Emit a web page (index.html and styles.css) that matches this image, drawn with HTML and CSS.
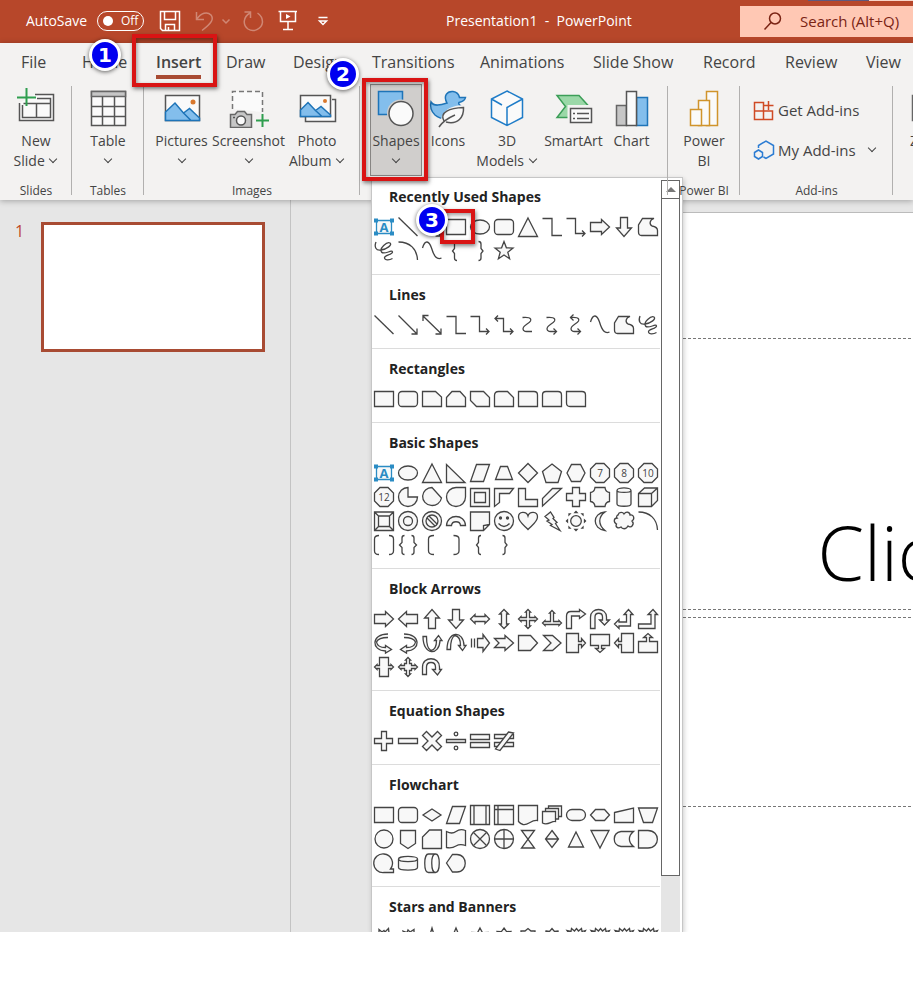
FILE: index.html
```html
<!DOCTYPE html>
<html lang="en">
<head>
<meta charset="utf-8">
<meta name="viewport" content="width=device-width, initial-scale=1">
<title>Presentation1 - PowerPoint</title>
<link rel="stylesheet" href="styles.css">
</head>
<body>
<div class="app">
  <header class="titlebar">
    <div class="quick">
      <span class="autosave" id="autosave">AutoSave</span>
      <button class="toggle" role="switch" aria-checked="false" aria-labelledby="autosave"><span class="knob"></span>Off</button>
      <button class="qbtn save" aria-label="Save"><svg width="22" height="22" viewBox="0 0 22 22"><path d="M1.500 1.500H20.500V20.500H3.500L1.500 18.500ZM5.500 1.500V9.500H16.500V1.500M6.500 20.500V14.500H15.500V20.500M9.500 17V20"/></svg></button>
      <button class="qbtn dim undo" aria-label="Undo"><svg width="22" height="22" viewBox="0 0 22 22"><path d="M3.500 2V9.500H11M3.500 9.500C8 3 14 1 18 5C21 9 19 13 9 20.500"/></svg></button>
      <button class="qbtn dim more" aria-label="Undo history"><svg width="10" height="22" viewBox="0 0 10 22"><path d="M1.500 9.500L5 13 8.500 9.500"/></svg></button>
      <button class="qbtn dim redo" aria-label="Repeat"><svg width="22" height="22" viewBox="0 0 22 22"><path d="M2.500 2H8.500V8M8 3C1 7 .500 15 6 19C12 23 20 18.500 20.500 12C20.500 8 18.500 5 15.500 3"/></svg></button>
      <button class="qbtn show" aria-label="Start From Beginning"><svg width="22" height="22" viewBox="0 0 22 22"><path d="M1.500 1.500H20M3.500 1.500V11.500H18.500V1.500M11 11.500V19M6 19.500H16"/><path class="solid" d="M9 4L13.500 6.500 9 9Z"/></svg></button>
      <button class="qbtn custom" aria-label="Customize Quick Access Toolbar"><svg width="12" height="22" viewBox="0 0 12 22"><path d="M1.500 7.500H10.500M2.500 11L6 14.500 9.500 11Z"/></svg></button>
    </div>
    <div class="doc-title">Presentation1&nbsp; -&nbsp; PowerPoint</div>
    <div class="strip"></div>
    <label class="search"><svg width="20" height="20" viewBox="0 0 20 20"><circle cx="12" cy="7.500" r="5.500"/><path d="M8 11.500L1.500 18.500"/></svg><input type="text" aria-label="Search" placeholder="Search (Alt+Q)"></label>
  </header>

  <div class="ribbon">
    <nav class="tabs">
      <a href="#">File</a>
      <a href="#">Home<span class="badge badge-one">1</span></a>
      <a href="#" class="active">Insert<span class="mark mark-tab"></span></a>
      <a href="#">Draw</a>
      <a href="#">Design<span class="badge badge-two">2</span></a>
      <a href="#">Transitions</a>
      <a href="#">Animations</a>
      <a href="#">Slide Show</a>
      <a href="#">Record</a>
      <a href="#">Review</a>
      <a href="#">View</a>
    </nav>

    <div class="groups">
      <section class="group slides">
        <div class="tools">
          <button class="tool"><svg class="icon" viewBox="0 0 40 40"><path class="paper" d="M19 6.500H37.500V32.500H3.500V15"/><path class="line" d="M21 10.500H34.500V29.500H6.500V17M7.500 15.500H34.500M20.500 15.500V29.500"/><path class="green" d="M10.500 0V18M1 9.500H20"/></svg><span>New<br>Slide <i class="chev"></i></span></button>
        </div>
        <h2>Slides</h2>
      </section>
      <section class="group tables">
        <div class="tools">
          <button class="tool"><svg class="icon" viewBox="0 0 40 40"><path class="paper" d="M3.500 3.500H37.500V37.500H3.500Z"/><path class="gray" d="M3.500 3.500H37.500V8.500H3.500Z"/><path class="line" d="M3.500 18.500H37.500M3.500 28.500H37.500M14.500 8.500V37.500M26.500 8.500V37.500"/></svg><span>Table<br><i class="chev"></i></span></button>
        </div>
        <h2>Tables</h2>
      </section>
      <section class="group images">
        <div class="tools">
          <button class="tool"><svg class="icon" viewBox="0 0 40 40"><path class="paper" d="M3.500 7.500H37.500V32.500H3.500Z"/><path class="blue" d="M3.500 24L13 15 21.500 25 27.500 20.500 37.500 30V32.500H3.500ZM21.500 25L29 32.500"/><circle class="sun" cx="31" cy="14" r="2.500"/></svg><span>Pictures<br><i class="chev"></i></span></button>
          <button class="tool"><svg class="icon" viewBox="0 0 40 40"><path class="dash" d="M3.500 21V3.500H33.500V24"/><path class="gray" d="M1.500 26.500H6L8.500 23.500H15.500L18 26.500H22.500V39.500H1.500Z"/><circle class="paper" cx="12" cy="32.500" r="4.500"/><path class="line" d="M4 29.500H6"/><path class="green" d="M33.500 26V39M27 32.500H40"/></svg><span>Screenshot<br><i class="chev"></i></span></button>
          <button class="tool"><svg class="icon" viewBox="0 0 40 40"><path class="paper" d="M35 11.500H38.500V33.500H8.500V29"/><path class="paper" d="M3.500 7.500H33.500V28.500H3.500Z"/><path class="blue" d="M3.500 22L11 14.500 18.500 22.500 24 18.500 33.500 27V28.500H3.500ZM18.500 22.500L25 28.500"/><circle class="sun" cx="28" cy="13" r="2"/></svg><span>Photo<br>Album <i class="chev"></i></span></button>
        </div>
        <h2>Images</h2>
      </section>
      <section class="group illustrations">
        <div class="tools">
          <div class="dropdown">
            <button class="tool pressed" aria-expanded="true"><svg class="icon" viewBox="0 0 40 40"><path class="blue" d="M2.500 3.500H26.500V26.500H2.500Z"/><circle class="halo" cx="25" cy="25.500" r="14"/><circle class="paper" cx="25" cy="25.500" r="12"/></svg><span>Shapes<br><i class="chev"></i></span></button>
            <span class="mark mark-shapes"></span>
            <div class="menu">
              <div class="lists">
                <section><h3>Recently Used Shapes</h3><div class="gallery" data-set="recent"></div><span class="mark mark-rect"></span><span class="badge badge-three">3</span></section>
                <section><h3>Lines</h3><div class="gallery" data-set="lines"></div></section>
                <section><h3>Rectangles</h3><div class="gallery" data-set="rectangles"></div></section>
                <section><h3>Basic Shapes</h3><div class="gallery" data-set="basic"></div></section>
                <section><h3>Block Arrows</h3><div class="gallery" data-set="arrows"></div></section>
                <section><h3>Equation Shapes</h3><div class="gallery" data-set="equation"></div></section>
                <section><h3>Flowchart</h3><div class="gallery" data-set="flowchart"></div></section>
                <section><h3>Stars and Banners</h3><div class="gallery" data-set="stars"></div></section>
              </div>
              <div class="scrollbar"><button class="up" aria-label="Scroll up"></button><div class="thumb"></div></div>
            </div>
          </div>
          <button class="tool"><svg class="icon" viewBox="0 0 40 40"><path class="blue" d="M3 14C6 19 13 17 19 15C15 8 19 3 25 3.500C29 4 31 7 31.500 9.500H37.500C37 13 33 14 31 14.500C29 17 35 17 34 22C30 32 14 33 7 27C3 23 2 18 3 14Z"/><path class="halo" d="M12 40C12 22 22 17 39 17C40 32 30 38 16 37Z"/><path class="paper" d="M16 33C11 24 22 20 35.500 19.500C36 29 30 37 18 34"/><path class="line" d="M11 39C15 33 20 30 27 27"/></svg><span>Icons</span></button>
          <button class="tool"><svg class="icon" viewBox="0 0 40 40"><path class="cube" d="M20 3L35.500 11V29.500L20 37.500 4.500 29.500V11ZM4.500 11L15 17M20 37.500V19.500L35.500 11"/></svg><span>3D<br>Models <i class="chev"></i></span></button>
          <button class="tool"><svg class="icon" viewBox="0 0 40 40"><path class="mint" d="M3 7.500H25L35 18.500 25 29.500H3L11.500 18.500Z"/><path class="halo" d="M13.500 17H40V37H13.500Z"/><path class="paper" d="M16.500 20.500H37.500V34.500H16.500Z"/><path class="line" d="M19 25.500H21M23 25.500H35M19 30.500H21M23 30.500H35"/></svg><span>SmartArt</span></button>
          <button class="tool"><svg class="icon" viewBox="0 0 40 40"><path class="gray" d="M4.500 17.500H14.500V37.500H4.500Z"/><path class="blue" d="M24.500 9.500H35.500V37.500H24.500Z"/><path class="paper" d="M14.500 3.500H24.500V37.500H14.500Z"/></svg><span>Chart</span></button>
        </div>
      </section>
      <section class="group power">
        <div class="tools">
          <button class="tool"><svg class="icon" viewBox="0 0 40 40"><path class="gold" d="M22.500 3.500H33.500V37.500H22.500Z"/><path class="gold" d="M14.500 12.500H25.500V37.500H14.500Z"/><path class="gold" d="M6.500 21.500H17.500V37.500H6.500Z"/></svg><span>Power<br>BI</span></button>
        </div>
        <h2>Power BI</h2>
      </section>
      <section class="group addins">
        <div class="tools rows">
          <button class="row"><svg width="22" height="22" viewBox="0 0 22 22"><path class="orange" d="M1.500 3.500H10.500V20.500H1.500ZM1.500 12H19.500V20.500H1.500M15.500 2V11M11 6.500H20.500"/></svg>Get Add-ins</button>
          <button class="row"><svg width="22" height="22" viewBox="0 0 22 22"><path class="hex" d="M5.500 9V6.500L13 2 20.500 6.500V15L13 19.500 10.500 18M1.500 13.500L5.500 11 9.500 13.500V17.500L5.500 20 1.500 17.500Z"/></svg>My Add-ins <i class="chev"></i></button>
        </div>
        <h2>Add-ins</h2>
      </section>
      <section class="group links">
        <div class="tools">
          <button class="tool"><svg class="icon" viewBox="0 0 40 40"><path class="gray" d="M3.500 7.500H37.500V32.500H3.500Z"/></svg><span>Zoom</span></button>
        </div>
      </section>
    </div>
  </div>

  <main class="workspace">
    <aside class="thumbs"><span>1</span><div class="thumbnail"></div></aside>
    <div class="stage">
      <div class="slide">
        <div class="holder title-holder"><h1>Click to add title</h1></div>
        <div class="holder subtitle-holder"></div>
      </div>
    </div>
  </main>
</div>
<script src="shapes.js"></script>
</body>
</html>
```

FILE: styles.css
```css
* { box-sizing: border-box; }
body { margin: 0; background: #fff; color: #444; font: 14px/20px "Open Sans", "Noto Sans", sans-serif; }
button { margin: 0; padding: 0; border: 0; background: none; color: inherit; font: inherit; }
h1, h2, h3 { margin: 0; font-weight: 400; }
svg { display: block; flex: none; fill: none; }
.app { display: flex; flex-direction: column; height: calc(100vh - 68px); overflow: hidden; background: #e6e6e6; }

/* Title bar */
.titlebar { position: relative; display: flex; flex: none; align-items: center; height: 43px; padding-bottom: 1px; background: #b7472a; color: #fff; }
.quick { display: flex; flex: none; align-items: center; width: 446px; padding-left: 26px; }
.autosave { width: 71px; }
.toggle { display: flex; align-items: center; gap: 8px; width: 47px; height: 20px; padding-left: 5px; border: 1px solid #fff; border-radius: 10px; font-size: 12px; }
.knob { width: 10px; height: 10px; border-radius: 50%; background: #fff; }
.qbtn svg { stroke: #fff; stroke-width: 1.5; }
.qbtn .solid { fill: #fff; stroke: none; }
.dim { opacity: .35; }
.save { margin-left: 15px; }
.undo { margin-left: 12px; }
.more { margin-left: 6px; }
.redo { margin-left: 11px; }
.show { margin-left: 13px; }
.custom { margin-left: 18px; }
.doc-title { flex: 1; white-space: nowrap; }
.strip { position: absolute; top: 0; right: 0; width: 105px; height: 1px; background: linear-gradient(90deg, #5f587c 61px, #f8d5c8 61px); }
.search { display: flex; flex: none; align-items: center; width: 173px; height: 31px; padding-left: 23px; background: #ffc8b4; }
.search svg { stroke: #7a2414; stroke-width: 1.5; }
.search input { width: 100px; flex: 1; margin-left: 17px; padding: 0; border: 0; background: none; color: #7a2414; font: inherit; font-size: 15px; }
.search input::placeholder { color: #7a2414; opacity: 1; }

/* Ribbon */
.ribbon { position: relative; z-index: 2; flex: none; background: #f3f2f1; box-shadow: 0 1px 6px rgba(0, 0, 0, .3); }
.tabs { display: grid; grid-template-columns: 61px 74px 70px 67px 79px 108px 113px 110px 82px 81px 1fr; height: 41px; padding: 6px 0 0 21px; font-size: 16px; line-height: 26px; }
.tabs a { position: relative; justify-self: start; height: 30px; color: #444; text-decoration: none; white-space: nowrap; }
.tabs .active { border-bottom: 4px solid #a84b33; font-weight: 600; }
.groups { display: flex; height: 116px; }
.group { position: relative; display: flex; flex: none; flex-direction: column; }
.group::after { content: ""; position: absolute; top: 2px; right: 0; bottom: 5px; width: 1px; background: #b1b0af; }
.group h2 { font-size: 12px; line-height: 18px; text-align: center; }
.tools { display: grid; flex: none; grid-template-columns: 1fr; height: 98px; }
.slides, .tables { width: 72px; }
.images { width: 216px; }
.images .tools { grid-template-columns: 67px 67px 70px; padding-left: 4px; }
.illustrations { width: 308px; }
.illustrations .tools { grid-template-columns: 52px 52px 66px 67px 49px; padding-left: 10px; }
.power { width: 72px; }
.addins { width: 153px; }
.links { width: 72px; margin-right: -52px; }
.links::after { content: none; }
.tool { display: flex; flex-direction: column; align-items: center; gap: 3px; width: 100%; padding-top: 4px; white-space: nowrap; }
.tool > span { display: block; }
.icon { width: 40px; height: 40px; stroke-width: 1.5; }
.chev { display: inline-block; width: 6px; height: 6px; margin: 0 2px 4px; border: solid #444; border-width: 0 1px 1px 0; transform: rotate(45deg); }
.pressed { height: 92px; border: 1px solid #8a8886; background: #d0cecc; padding-top: 3px; }
.paper { fill: #fafafa; stroke: #555; }
.line { stroke: #555; }
.gray { fill: #c6c6c6; stroke: #666; }
.green { stroke: #2f9e4f; stroke-width: 2; }
.blue { fill: #83beec; stroke: #1e74b8; }
.sun { fill: #d9782d; }
.dash { fill: #fafafa; stroke: #777; stroke-dasharray: 5 3; }
.halo { fill: #f3f2f1; }
.pressed .halo { fill: #d0cecc; }
.cube { fill: #fafafa; stroke: #1e7cc8; }
.mint { fill: #9bd8a8; stroke: #3c9e58; }
.gold { fill: #fafafa; stroke: #d0942c; }
.orange { stroke: #cf4a24; stroke-width: 1.5; }
.hex { stroke: #2b7cd3; stroke-width: 1.5; }
.rows { display: flex; flex-direction: column; padding: 15px 0 0 13px; gap: 18px; }
.row { display: flex; align-items: center; gap: 3px; height: 22px; font-size: 15px; white-space: nowrap; }
.row .chev { margin-left: 10px; }

/* Shapes menu */
.dropdown { position: relative; }
.menu { position: absolute; top: 93px; left: 1px; display: flex; width: 312px; height: calc(100vh - 245px); border: 1px solid #c6c6c6; border-bottom: 0; background: #fff; box-shadow: 1px 2px 5px rgba(0, 0, 0, .2); overflow: hidden; }
.lists { width: 288px; }
.lists section { position: relative; padding-bottom: 11px; }
.lists section + section { border-top: 1px solid #dcdcdc; }
.lists h3 { height: 38px; padding-left: 17px; color: #222; font-size: 14px; font-weight: 700; line-height: 40px; }
.lists section:first-child h3 { height: 37px; line-height: 37px; }
.gallery { display: grid; grid-template-columns: repeat(12, 24px); grid-auto-rows: 24px; }
.shape svg { width: 24px; height: 24px; fill: #f8f8f8; stroke: #444; stroke-width: 1.3; }
.shape .open { fill: none; }
.shape .ink { fill: #444; }
.shape text { fill: #444; stroke: none; font: 10px "Open Sans", sans-serif; text-anchor: middle; }
.shape .tb { stroke: #2b8cc4; }
.shape .tb-dot { fill: #2b8cc4; stroke: none; }
.shape .tb-a { fill: #2b8cc4; font-size: 13px; font-weight: 700; }
.scrollbar { display: flex; flex-direction: column; width: 19px; margin: 2px 0 0 1px; background: #e5e5e5; }
.up { display: grid; place-items: center; flex: none; height: 19px; border: 1px solid #666; background: #fff; }
.up::before { content: ""; border: solid transparent; border-width: 0 5px 5px; border-bottom-color: #777; }
.thumb { height: 90%; flex: none; border: 1px solid #666; border-top: 0; background: #fff; }

/* Step marks */
.mark { position: absolute; z-index: 3; border: 4px solid #d91414; box-shadow: 1px 2px 4px rgba(0, 0, 0, .5), inset 1px 2px 4px rgba(0, 0, 0, .4); pointer-events: none; }
.mark-tab { top: -15px; left: -24px; width: 85px; height: 53px; }
.mark-shapes { top: -6px; left: -8px; width: 66px; height: 103px; }
.mark-rect { top: 31px; left: 68px; width: 35px; height: 35px; }
.badge { position: absolute; z-index: 4; width: 32px; height: 32px; border: 3px solid #fff; border-radius: 50%; background: #0000f0; box-shadow: 0 1px 4px rgba(0, 0, 0, .6); color: #fff; font: bold 20px/26px "DejaVu Sans", sans-serif; text-align: center; }
.badge-one { top: -10px; left: 7px; }
.badge-two { top: 9px; left: 34px; }
.badge-three { top: 26px; left: 44px; }

/* Workspace */
.workspace { display: flex; flex: 1; min-height: 0; }
.thumbs { display: flex; flex: none; gap: 17px; width: 291px; padding: 21px 0 0 15px; border-right: 1px solid #c3c3c3; color: #c0492c; font-size: 16px; }
.thumbnail { width: 224px; height: 130px; margin-top: 1px; border: 3px solid #a84b33; background: #fff; }
.stage { flex: 1; min-width: 0; padding: 12px 0 0 100px; overflow: hidden; }
.slide { width: 1386px; height: 100%; padding: 125px 156px 0; border: solid #bbb; border-width: 1px 0 0 1px; background: #fff; }
.holder { border: 1px dashed #777; }
.title-holder { display: flex; align-items: end; justify-content: center; height: 272px; padding-bottom: 12px; }
.title-holder h1 { color: #000; font: 300 75px/90px "Open Sans", "Noto Sans", sans-serif; white-space: nowrap; }
.subtitle-holder { height: 190px; margin-top: 7px; }
```

FILE: shapes.js
```js
const C = (r, x = 12, y = 12, cls = "") => `<circle class="${cls}" cx="${x}" cy="${y}" r="${r}"/>`;
const P = (d, cls = "") => `<path class="${cls}" d="${d}"/>`;
const label = (n) => P("M8 2.500H16L21.500 8V16L16 21.500H8L2.500 16V8Z") + `<text x="12" y="16">${n}</text>`;

// Regular star or burst with n tips
const star = (n, outer, inner) => {
  const pts = [];
  for (let i = 0; i < n * 2; i++) {
    const r = i % 2 ? inner : outer;
    const a = (Math.PI * i) / n - Math.PI / 2;
    pts.push(`${(12 + r * Math.cos(a)).toFixed(1)} ${(12 + r * Math.sin(a)).toFixed(1)}`);
  }
  return P(`M${pts.join("L")}Z`);
};

const textBox = P("M4.500 5.500H19.500V18.500H4.500Z", "tb") +
  P("M2 3.500h4v4h-4ZM18 3.500h4v4h-4ZM2 16.500h4v4h-4ZM18 16.500h4v4h-4Z", "tb-dot") +
  '<text class="tb-a" x="12" y="17">A</text>';
const line = P("M2.500 2.500L21.500 21", "open");
const lineArrow = P("M2.500 2.500L20.500 20.500M21 15.500V21H15.500", "open");
const elbow = P("M2.500 3.500H12V20.500H22", "open");
const elbowArrow = P("M2.500 3.500H11.500V18.500H21M18 15.500L21 18.500 18 21.500", "open");
const freeform = P("M6.500 3.500H18C13.500 5 13 9 16 11C19 11.500 21.500 12 21.500 15.500V20.500H5.500Q2.500 20.500 2.500 17V10Z");
const scribble = P("M4 3C2 8 4 12 9 11C15 10 20.500 6 18 4C15 2.500 7 9 9.500 13C12 16.500 20 10 20.500 13C20.500 16 12 16 12.500 19C13 22 18 21 20.500 19.500", "open");
const arc = P("M2.500 3C14 3 21 10 21.500 21", "open");
const curve = P("M2.500 9C5 .500 9 1.500 11.500 9C14 17.500 17 21 21.500 19", "open");
const braceL = P("M13 2.500Q10.500 2.500 10.500 5V9.500L8.500 12 10.500 14.500V19Q10.500 21.500 13 21.500", "open");
const braceR = P("M10.500 2.500Q13 2.500 13 5V9.500L15 12 13 14.500V19Q13 21.500 10.500 21.500", "open");
const rect = P("M2.500 4.500H21.500V19.500H2.500Z");
const round = '<rect x="2.500" y="4.500" width="19" height="15" rx="3.500"/>';
const ellipse = '<ellipse cx="12" cy="12" rx="9.500" ry="7"/>';
const triangle = P("M12 3L21.500 21.500H2.500Z");
const right = P("M2.500 7.500H13.500V4.500L21.500 12 13.500 19.500V16.500H2.500Z");
const down = P("M8.500 2.500H15.500V13H19.500L12 21.500 4.500 13H8.500Z");
const parallelogram = P("M8.500 3.500H21.500L15.500 20.500H2.500Z");
const curved = P("M6.500 4.500C11 4 16 4.500 14.500 8C13 11 7 12 7 16C7 19 11 18.500 16 18.500", "open");
const burst = P("M2.500 9.500L5 8.500 3 5.500 7 6.500 7.500 3.500 10.500 6 12.500 3.500 14.500 6 17.500 3.500 18 6.500 21.500 5.500 19.500 9 21.500 12 19.500 15 21.500 18.500 18 18 17 21 12 19 7 21 6 18 2.500 18.500 4.500 15Z");

const sets = {
  recent: [
    ["Text Box", textBox], ["Line", line], ["Line Arrow", lineArrow], ["Rectangle", rect], ["Oval", ellipse],
    ["Rounded Rectangle", round], ["Isosceles Triangle", triangle], ["Elbow Connector", elbow],
    ["Elbow Arrow Connector", elbowArrow], ["Right Arrow", right], ["Down Arrow", down], ["Freeform", freeform],
    ["Scribble", scribble], ["Arc", arc], ["Curve", curve], ["Left Brace", braceL], ["Right Brace", braceR],
    ["Star: 5 Points", star(5, 9.5, 4)]
  ],
  lines: [
    ["Line", line], ["Line Arrow", lineArrow], ["Double Arrow", P("M3 3L21 20.500M21 15.500V21H15.500M3 8V2.500H8.500", "open")],
    ["Elbow Connector", elbow], ["Elbow Arrow", elbowArrow],
    ["Elbow Double Arrow", P("M3 5.500H11.500V18.500H21M18 15.500L21 18.500 18 21.500M6 2.500L3 5.500 6 8.500", "open")],
    ["Curved Connector", curved], ["Curved Arrow", curved + P("M13.500 15.500L16.500 18.500 13.500 21.500", "open")],
    ["Curved Double Arrow", curved + P("M13.500 15.500L16.500 18.500 13.500 21.500M9.500 1.500L6.500 4.500 9.500 7.500", "open")],
    ["Curve", curve], ["Freeform", freeform], ["Scribble", scribble]
  ],
  rectangles: [
    ["Rectangle", rect], ["Rounded", round], ["Snip Single", P("M2.500 4.500H15.500L21.500 10V19.500H2.500Z")],
    ["Snip Same Side", P("M2.500 10.500L8 4.500H16L21.500 10.500V19.500H2.500Z")],
    ["Snip Diagonal", P("M2.500 4.500H15.500L21.500 10.500V19.500H8.500L2.500 13.500Z")],
    ["Snip and Round", P("M6.500 4.500H15.500L21.500 10.500V19.500H2.500V8.500Q2.500 4.500 6.500 4.500Z")],
    ["Round Single", P("M2.500 4.500H18Q21.500 4.500 21.500 8V19.500H2.500Z")],
    ["Round Same Side", P("M6 4.500H18Q21.500 4.500 21.500 8V19.500H2.500V8Q2.500 4.500 6 4.500Z")],
    ["Round Diagonal", P("M2.500 4.500H18Q21.500 4.500 21.500 8V19.500H6Q2.500 19.500 2.500 16Z")]
  ],
  basic: [
    ["Text Box", textBox], ["Oval", ellipse], ["Triangle", triangle], ["Right Triangle", P("M2.500 3.500V21.500H21Z")],
    ["Parallelogram", parallelogram], ["Trapezoid", P("M8.500 5.500H15.500L20.500 18.500H3.500Z")],
    ["Diamond", P("M12 2.500L21.500 12 12 21.500 2.500 12Z")], ["Pentagon", P("M12 3L21.500 10.500 18 21.500H6L2.500 10.500Z")],
    ["Hexagon", P("M7.500 3.500H16.500L21 12 16.500 20.500H7.500L3 12Z")], ["Heptagon", label(7)], ["Octagon", label(8)], ["Decagon", label(10)],
    ["Dodecagon", label(12)], ["Pie", P("M12 2.500V12H21.500A9.500 9.500 0 1 1 12 2.500Z")],
    ["Chord", P("M12 2.500L21.500 13A9.500 9 0 1 1 12 2.500Z")], ["Teardrop", P("M12 2.500H21.500V12A9.500 9.500 0 1 1 12 2.500Z")],
    ["Frame", P("M2.500 3.500H21.500V21.500H2.500ZM6.500 7.500H17.500V17.500H6.500Z")],
    ["Half Frame", P("M2.500 3.500H21.500L17.500 8.500H7.500V17.500L2.500 21.500Z")], ["L-Shape", P("M2.500 3.500H9.500V14.500H21.500V21.500H2.500Z")],
    ["Diagonal Stripe", P("M12.500 3.500H21.500L2.500 21V13.500Z")], ["Cross", P("M8.500 2.500H15.500V8.500H21.500V15.500H15.500V21.500H8.500V15.500H2.500V8.500H8.500Z")],
    ["Plaque", P("M7 2.500H17Q17.500 7 21.500 7.500V16.500Q17.500 17 17 21.500H7Q6.500 17 2.500 16.500V7.500Q6.500 7 7 2.500Z")],
    ["Cylinder", P("M5 5.500V19C5 22 19 22 19 19V5.500C19 2 5 2 5 5.500C5 8 19 8 19 5.500")],
    ["Cube", P("M2.500 8.500L8.500 3H21.500V15.500L15.500 21.500H2.500ZM2.500 8.500H15.500V21.500M15.500 8.500L21.500 3")],
    ["Bevel", P("M2.500 3H21.500V21.500H2.500ZM6.500 7H17.500V17.500H6.500ZM2.500 3L6.500 7M21.500 3L17.500 7M2.500 21.500L6.500 17.500M21.500 21.500L17.500 17.500")],
    ["Donut", C(9.5) + C(4.5)], ["No Symbol", C(9.5) + C(6) + P("M7 9L15 17M9 7L17 15")],
    ["Block Arc", P("M2.500 16.500C3 4.500 21 4.500 21.500 16.500H16.500C16 11.500 8 11.500 7.500 16.500Z")],
    ["Folded Corner", P("M2.500 3H21.500V15.500L15.500 21.500H2.500ZM21.500 15.500L15.500 16.500V21.500")],
    ["Smiley Face", C(9.5) + C(1, 8.5, 9, "ink") + C(1, 15.5, 9, "ink") + P("M6.500 14.500Q12 20.500 17.500 14.500", "open")],
    ["Heart", P("M12 7C13.500 2 21.500 2 21.500 8C21.500 13 15 17 12 20.500C9 17 2.500 13 2.500 8C2.500 2 10.500 2 12 7Z")],
    ["Lightning Bolt", P("M5 7.500L10.500 3 14 8.500 13 9.500 17 13.500 15.500 14.500 20 21.500 10.500 16.500 12 15.500 7 12 9 11Z")],
    ["Sun", C(5.3) + P("M11 3.500L12 2.500 13 3.500ZM11 20.500L12 21.500 13 20.500ZM3.500 11L2.500 12 3.500 13ZM20.500 11L21.500 12 20.500 13ZM5 6V5H6ZM18 5H19V6ZM5 18V19H6ZM18 19H19V18Z", "ink")],
    ["Moon", P("M17 3C4 4 4 20 17 21.500C10 16 10 8 17 3Z")],
    ["Cloud", P("M6 6C7 2.500 11 3 12 5C14 2 18 3 18 6C22 5 23 10 20 12C23 15 19 20 16 17C14 21 10 20 9 18C6 20 3 18 4.500 15C1 13 2 9 5 9C4 8 5 6 6 6Z")],
    ["Arc", arc], ["Double Bracket", P("M7 2.500Q2.500 2.500 2.500 6V18Q2.500 21.500 7 21.500M17 2.500Q21.500 2.500 21.500 6V18Q21.500 21.500 17 21.500", "open")],
    ["Double Brace", P("M8.500 2.500Q6 2.500 6 5V9.500L3.500 12 6 14.500V19Q6 21.500 8.500 21.500M15.500 2.500Q18 2.500 18 5V9.500L20.500 12 18 14.500V19Q18 21.500 15.500 21.500", "open")],
    ["Left Bracket", P("M14 2.500Q8.500 2.500 8.500 6V18Q8.500 21.500 14 21.500", "open")],
    ["Right Bracket", P("M9.500 2.500Q15 2.500 15 6V18Q15 21.500 9.500 21.500", "open")], ["Left Brace", braceL], ["Right Brace", braceR]
  ],
  arrows: [
    ["Right", right], ["Left", P("M21.500 7.500H10.500V4.500L2.500 12 10.500 19.500V16.500H21.500Z")],
    ["Up", P("M8.500 21.500H15.500V11H19.500L12 2.500 4.500 11H8.500Z")], ["Down", down],
    ["Left-Right", P("M2.500 12L7 7.500V9.500H17V7.500L21.500 12 17 16.500V14.500H7V16.500Z")],
    ["Up-Down", P("M12 2.500L16.500 7H14.500V17H16.500L12 21.500 7.500 17H9.500V7H7.500Z")],
    ["Quad", P("M12 2.500L14.500 5H13.500V10.500H19V9.500L21.500 12 19 14.500V13.500H13.500V19H14.500L12 21.500 9.500 19H10.500V13.500H5V14.500L2.500 12 5 9.500V10.500H10.500V5H9.500Z")],
    ["Left-Right-Up", P("M12 3.500L14.500 6H13.500V14.500H19V13.500L21.500 16 19 18.500V17.500H5V18.500L2.500 16 5 13.500V14.500H10.500V6H9.500Z")],
    ["Bent", P("M2.500 21.500V9Q2.500 4.500 7 4.500H15.500V2.500L21.500 7 15.500 11.500V9H7.500V21.500Z")],
    ["U-Turn", P("M2.500 21.500V10C2.500 0 18.500 0 18.500 10V13H21.500L16.500 18 11.500 13H14.500V10C14.500 5 7 5 7 10V21.500Z")],
    ["Left-Up", P("M2.500 17L7 12.500V15H14.500V7.500H12L16.500 2.500 21 7.500H18.500V19H7V21.500Z")],
    ["Bent-Up", P("M2.500 17H15V7.500H12L17 2.500 21.500 7.500H19V21.500H2.500Z")],
    ["Curved Right", P("M16 3C-1 3 -1 19.500 13.500 20V22L19.500 18.500 13.500 14.500V16.500C8 16.500 5 14 4.500 11C6 7.500 10 6.500 16 6.500")],
    ["Curved Left", P("M8 3C25 3 25 19.500 10.500 20V22L4.500 18.500 10.500 14.500V16.500C16 16.500 19 14 19.500 11C18 7.500 14 6.500 8 6.500")],
    ["Curved Up", P("M3 5.500C3 25 19.500 25 20 9.500H22L18.500 4.500 14.500 9.500H16.500C16.500 16 14 19 11 19.500C7.500 18 6.500 14 6.500 5.500Z")],
    ["Curved Down", P("M3 18.500C3 -1 19.500 -1 20 14.500H22L18.500 19.500 14.500 14.500H16.500C16.500 8 14 5 11 4.500C7.500 6 6.500 10 6.500 18.500Z")],
    ["Striped Right", P("M9.500 7.500H15V3.500L21.500 12 15 20.500V16.500H9.500ZM3.500 7.500V16.500M6.500 7.500V16.500")],
    ["Notched Right", P("M2.500 7.500H13V4.500L21.500 12 13 19.500V16.500H2.500L7 12Z")], ["Arrow: Pentagon", P("M2.500 4.500H14.500L21.500 12 14.500 19.500H2.500Z")],
    ["Chevron", P("M3.500 4.500H12.500L21 12 12.500 19.500H3.500L11 12Z")],
    ["Callout Right", P("M2.500 2.500H14.500V10.500H17.500V7.500L21.500 12 17.500 16.500V13.500H14.500V21.500H2.500Z")],
    ["Callout Down", P("M2.500 3.500H21.500V14.500H13.500V17.500H16.500L12 21.500 7.500 17.500H10.500V14.500H2.500Z")],
    ["Callout Left", P("M21.500 2.500H9.500V10.500H6.500V7.500L2.500 12 6.500 16.500V13.500H9.500V21.500H21.500Z")],
    ["Callout Up", P("M2.500 21.500H21.500V10.500H13.500V6.500H16.500L12 2.500 7.500 6.500H10.500V10.500H2.500Z")],
    ["Callout Left-Right", P("M7.500 2.500H16.500V10.500H19V9.500L21.500 12 19 14.500V13.500H16.500V21.500H7.500V13.500H5V14.500L2.500 12 5 9.500V10.500H7.500Z")],
    ["Callout Quad", P("M12 2.500L14.500 5H13.500V8.500H15.500V10.500H19V9.500L21.500 12 19 14.500V13.500H15.500V15.500H13.500V19H14.500L12 21.500 9.500 19H10.500V15.500H8.500V13.500H5V14.500L2.500 12 5 9.500V10.500H8.500V8.500H10.500V5H9.500Z")],
    ["Circular", P("M2.500 19.500V12C2.500 1 19.500 1 19.500 12V14.500H21.500L17.500 20 12.500 14.500H15.500V12C15.500 6 6.500 6 6.500 12V19.500Z")]
  ],
  equation: [
    ["Plus", P("M9.500 2.500H14.500V9.500H20.500V14.500H14.500V21.500H9.500V14.500H2.500V9.500H9.500Z")], ["Minus", P("M2.500 9.500H21.500V14.500H2.500Z")],
    ["Multiply", P("M6.500 2.500L12 8 17.500 2.500 21.500 6.500 16 12 21.500 17.500 17.500 21.500 12 16 6.500 21.500 2.500 17.500 8 12 2.500 6.500Z")],
    ["Divide", P("M2.500 10.500H21.500V13.500H2.500Z") + C(1.8, 12, 5) + C(1.8, 12, 19)],
    ["Equal", P("M2.500 5.500H21.500V10.500H2.500ZM2.500 13.500H21.500V18.500H2.500Z")],
    ["Not Equal", P("M2.500 5.500H21.500V9.500H2.500ZM2.500 13.500H21.500V17.500H2.500Z") + P("M16.500 3L21.500 4 8 21.500 3.500 20Z")]
  ],
  flowchart: [
    ["Process", rect], ["Alternate Process", round], ["Decision", P("M12 6L21 12 12 18 3 12Z")], ["Data", parallelogram],
    ["Predefined Process", P("M2.500 2.500H21.500V21.500H2.500ZM6 2.500V21.500M18 2.500V21.500")],
    ["Internal Storage", P("M2.500 2.500H21.500V21.500H2.500ZM6 2.500V21.500M2.500 6.500H21.500")],
    ["Document", P("M2.500 2.500H21.500V17.500C15 16.500 12 23 7 21.500Q4.500 21 2.500 18.500Z")],
    ["Multidocument", P("M8.500 3H21.500V13.500H8.500Z") + P("M5.500 5.500H18.500V16H5.500Z") + P("M2.500 8.500H15.500V18.500C11 18 8 23 2.500 20Z")],
    ["Terminator", '<rect x="2.500" y="6.500" width="19" height="11" rx="5.500"/>'], ["Preparation", P("M7.500 6.500H16.500L21.500 12 16.500 17.500H7.500L2.500 12Z")],
    ["Manual Input", P("M2.500 9.500L21.500 5V19.500H2.500Z")], ["Manual Operation", P("M2.500 5H21.500L16.500 19.500H7.500Z")],
    ["Connector", C(9)], ["Off-page Connector", P("M4.500 3.500H19.500V16.500L12 21.500 4.500 16.500Z")], ["Card", P("M9.500 3H21.500V21.500H2.500V10Z")],
    ["Punched Tape", P("M2.500 4.500Q8 7.500 12 4.500T21.500 3.500V18.500Q16 16.500 12 19T2.500 20.500Z")],
    ["Summing Junction", C(9.5) + P("M5.500 5.500L18.500 18.500M18.500 5.500L5.500 18.500")], ["Or", C(9.5) + P("M12 2.500V21.500M2.500 12H21.500")],
    ["Collate", P("M5.500 3.500H18.500L5.500 21H18.500Z")], ["Sort", P("M12 3.500L18.500 12 12 20.500 5.500 12ZM5.500 12H18.500")],
    ["Extract", P("M12 5L19.500 20H4.500Z")], ["Merge", P("M3 3.500H21L12 21Z")],
    ["Stored Data", P("M9 4.500H21.500C16 9 16 15 21.500 19.500H9C0 18 0 6 9 4.500Z")], ["Delay", P("M2.500 3.500H12C24.500 3.500 24.500 21 12 21H2.500Z")],
    ["Sequential Storage", P("M12 3A9.300 9.300 0 1 0 12 21.500H21.500V18H18.500A9.300 9.300 0 0 0 12 3Z")],
    ["Magnetic Disk", P("M2.500 8V16.500C2.500 20 21.500 20 21.500 16.500V8C21.500 4.500 2.500 4.500 2.500 8C2.500 11.500 21.500 11.500 21.500 8")],
    ["Direct Access Storage", P("M8.500 3H15.500C20.500 3 20.500 21.500 15.500 21.500H8.500C3.500 21.500 3.500 3 8.500 3ZM15.500 3C10.500 3 10.500 21.500 15.500 21.500")],
    ["Display", P("M2.500 12L8.500 3.500H13C24 3.500 24 21 13 21H8.500Z")]
  ],
  stars: [
    ["Explosion 1", P("M7 4.500L10 7 12 5.500 13 7 16.500 3.500 17 8 21 9 18 13 21 18 14 17 10 21 8 17 3 18 6 13 3 9 7 8Z")],
    ["Explosion 2", P("M7 6L11 7.500 12 5 14 7 18 4.500 18 8 22 9 18 13 19 18 14 17 9 21 8 17 3 19 5 14 2 11 8 9Z")],
    ["4 Points", star(4, 9, 3)], ["5 Points", star(5, 9, 4)], ["6 Points", star(6, 9, 5)], ["7 Points", star(7, 9, 6)],
    ["8 Points", P("M5 6H9L12 3.500 15 6H19V10L21.500 12 19 14V19H5V14L2.500 12 5 10Z")],
    ["10 Points", P("M6 6L9.500 6.500 12 3.500 14.500 6.500 18 6 18.500 10 21 12 18.500 14 18 18 12 20.500 6 18 5.500 14 3 12 5.500 10Z")],
    ["12 Points", burst], ["16 Points", burst], ["24 Points", burst], ["32 Points", burst]
  ]
};

document.querySelectorAll(".gallery").forEach((box) => {
  box.innerHTML = sets[box.dataset.set]
    .map(([name, art]) => `<button class="shape" aria-label="${name}"><svg viewBox="0 0 24 24">${art}</svg></button>`)
    .join("");
});
```
